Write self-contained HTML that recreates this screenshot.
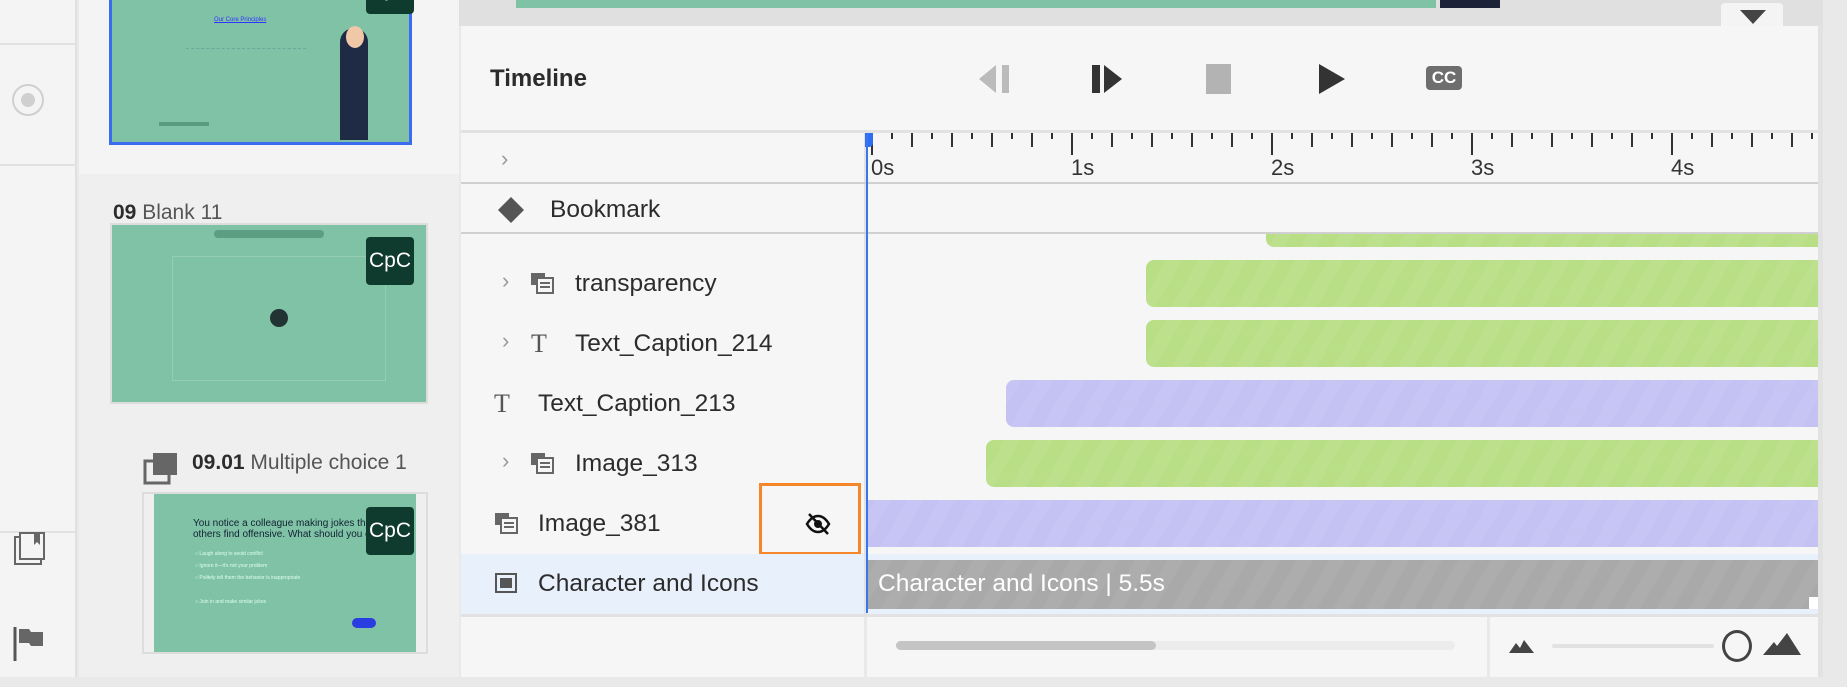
<!DOCTYPE html>
<html><head><meta charset="utf-8"><style>
*{margin:0;padding:0;box-sizing:border-box}
body{width:1847px;height:687px;overflow:hidden;background:#e9e9e9;font-family:"Liberation Sans",sans-serif;position:relative;color:#2c2c2c}
.a{position:absolute}
.thumb{position:absolute;background:#80c2a6}
.cpc{position:absolute;width:48px;height:48px;background:#0f3a2e;border-radius:4px;color:#fff;font-size:21px;display:flex;align-items:center;justify-content:center}
.lbl{position:absolute;font-size:24.5px;color:#2c2c2c;white-space:nowrap}
.bar{position:absolute;border-radius:8px 0 0 8px;background-image:repeating-linear-gradient(-60deg,rgba(255,255,255,0) 0 14px,rgba(255,255,255,.05) 14px 28px)}
.g{background-color:#b8de86}.p{background-color:#c4c2f3}
</style></head><body>
<!-- left rail -->
<div class="a" style="left:0;top:0;width:77px;height:687px;background:#f4f4f4;border-right:2px solid #e0e0e0"></div>
<div class="a" style="left:0;top:43px;width:77px;height:2px;background:#e2e2e2"></div>
<div class="a" style="left:0;top:164px;width:77px;height:2px;background:#e2e2e2"></div>
<div class="a" style="left:0;top:531px;width:77px;height:2px;background:#e2e2e2"></div>
<div class="a" style="left:12px;top:84px;width:32px;height:32px;border:2px solid #cfcfcf;border-radius:50%"></div>
<div class="a" style="left:21px;top:93px;width:14px;height:14px;background:#cfcfcf;border-radius:50%"></div>
<svg class="a" style="left:14px;top:532px" width="32" height="34"><rect x="1" y="5" width="26" height="27" fill="none" stroke="#666" stroke-width="2"/><rect x="6" y="1" width="24" height="26" fill="#f4f4f4" stroke="#666" stroke-width="2"/><path d="M20 1v12l3-3 3 3V1z" fill="#666"/></svg>
<svg class="a" style="left:13px;top:626px" width="34" height="36"><path d="M2 1v34" stroke="#555" stroke-width="3"/><path d="M6 3h10l2 3h12v14H18l-2-3H6z" fill="#666"/></svg>
<!-- slide panel -->
<div class="a" style="left:79px;top:0;width:380px;height:174px;background:#f4f4f4"></div>
<div class="a" style="left:79px;top:174px;width:380px;height:503px;background:#efefef"></div>
<div class="a" style="left:109px;top:-4px;width:303px;height:149px;border:3px solid #3b6cf0;background:#80c2a6"></div>
<div class="a" style="left:214px;top:17px;font-size:6px;color:#33f;text-decoration:underline">Our Core Principles</div>
<div class="a" style="left:186px;top:48px;width:120px;height:30px;border-top:1px dashed #6a9"></div>
<div class="a" style="left:340px;top:28px;width:28px;height:112px;background:#1f2a44;border-radius:14px 14px 0 0"></div>
<div class="a" style="left:346px;top:26px;width:18px;height:22px;background:#f0c8a8;border-radius:50%"></div>
<div class="cpc" style="left:366px;top:-34px">CpC</div>
<div class="a" style="left:159px;top:122px;width:50px;height:4px;background:#5a9a80"></div>
<div class="a" style="left:113px;top:201px;font-size:21px"><b>09</b> <span style="color:#555">Blank 11</span></div>
<div class="a" style="left:110px;top:223px;width:318px;height:181px;border:2px solid #ddd;background:#80c2a6"></div>
<div class="a" style="left:214px;top:230px;width:110px;height:8px;background:#5d9d84;border-radius:4px"></div>
<div class="a" style="left:172px;top:256px;width:214px;height:125px;border:1px solid #94ccb4"></div>
<div class="a" style="left:270px;top:309px;width:18px;height:18px;background:#233;border-radius:50%"></div>
<div class="cpc" style="left:366px;top:237px">CpC</div>
<svg class="a" style="left:143px;top:451px" width="38" height="34"><rect x="2" y="10" width="24" height="22" fill="none" stroke="#666" stroke-width="3"/><rect x="10" y="2" width="24" height="22" fill="#666"/></svg>
<div class="a" style="left:192px;top:451px;font-size:21px"><b>09.01</b> <span style="color:#555">Multiple choice 1</span></div>
<div class="a" style="left:142px;top:492px;width:286px;height:162px;border:2px solid #ddd;background:#efefef"></div>
<div class="thumb" style="left:154px;top:494px;width:262px;height:158px"></div>
<div class="a" style="left:193px;top:518px;font-size:10px;color:#123;line-height:11px">You notice a colleague making jokes that<br>others find offensive. What should you do?</div>
<div class="a" style="left:195px;top:548px;font-size:5px;color:#dfe;line-height:12px">○ Laugh along to avoid conflict<br>○ Ignore it—it's not your problem<br>○ Politely tell them the behavior is inappropriate<br><br>○ Join in and make similar jokes</div>
<div class="a" style="left:352px;top:618px;width:24px;height:10px;background:#2a3de0;border-radius:5px"></div>
<div class="cpc" style="left:366px;top:507px">CpC</div>
<!-- timeline panel -->
<div class="a" style="left:459px;top:0;width:1364px;height:26px;background:#e0e0e0"></div>
<div class="a" style="left:516px;top:0;width:920px;height:8px;background:#80c2a6"></div>
<div class="a" style="left:1440px;top:0;width:60px;height:8px;background:#1c2238"></div>
<div class="a" style="left:1721px;top:3px;width:62px;height:24px;background:#f4f4f4;border-radius:4px 4px 0 0"></div>
<svg class="a" style="left:1739px;top:9px" width="28" height="16"><path d="M1 1h26L14 15z" fill="#444"/></svg>
<div class="a" style="left:461px;top:26px;width:1362px;height:104px;background:#f6f6f6"></div>
<div class="a" style="left:490px;top:65px;font-size:24px;font-weight:bold;color:#2c2c2c">Timeline</div>
<svg class="a" style="left:978px;top:64px" width="36" height="30"><path d="M1 15L18 1v28z" fill="#bbb"/><rect x="24" y="1" width="7" height="28" fill="#bbb"/></svg>
<svg class="a" style="left:1090px;top:64px" width="36" height="30"><rect x="2" y="1" width="8" height="28" fill="#333"/><path d="M14 1l18 14-18 14z" fill="#333"/></svg>
<div class="a" style="left:1206px;top:64px;width:25px;height:30px;background:#b3b3b3"></div>
<svg class="a" style="left:1317px;top:63px" width="30" height="32"><path d="M2 1l26 15L2 31z" fill="#333"/></svg>
<div class="a" style="left:1426px;top:66px;width:36px;height:24px;background:#6e6e6e;border-radius:4px;color:#fff;font-weight:bold;font-size:17px;text-align:center;line-height:24px">CC</div>
<div class="a" style="left:461px;top:130px;width:1362px;height:3px;background:#e2e2e2"></div>
<!-- left column -->
<div class="a" style="left:461px;top:133px;width:403px;height:482px;background:#f6f6f6"></div>
<div class="a" style="left:864px;top:133px;width:3px;height:482px;background:#e2e2e2"></div>
<div class="a" style="left:867px;top:133px;width:951px;height:482px;background:#f6f6f6"></div>
<div class="a" style="left:1818px;top:26px;width:5px;height:651px;background:#e2e2e2"></div>
<div class="a" style="left:501px;top:146px;font-size:22px;color:#999">›</div>
<!-- ruler ticks -->
<svg class="a" style="left:867px;top:133px" width="951" height="50">
<g stroke="#333" stroke-width="2">
<path d="M5 0v22M205 0v22M405 0v22M605 0v22M805 0v22"/>
<path d="M25 0v6M65 0v6M105 0v6M145 0v6M185 0v6M225 0v6M265 0v6M305 0v6M345 0v6M385 0v6M425 0v6M465 0v6M505 0v6M545 0v6M585 0v6M625 0v6M665 0v6M705 0v6M745 0v6M785 0v6M825 0v6M865 0v6M905 0v6M945 0v6"/>
<path d="M45 0v14M85 0v14M125 0v14M165 0v14M245 0v14M285 0v14M325 0v14M365 0v14M445 0v14M485 0v14M525 0v14M565 0v14M645 0v14M685 0v14M725 0v14M765 0v14M845 0v14M885 0v14M925 0v14"/>
</g>
<g font-size="22" fill="#333" font-family="Liberation Sans"><text x="4" y="42">0s</text><text x="204" y="42">1s</text><text x="404" y="42">2s</text><text x="604" y="42">3s</text><text x="804" y="42">4s</text></g>
</svg>
<div class="a" style="left:865px;top:133px;width:8px;height:14px;background:#2d6ff0;border-radius:0 0 4px 0"></div>
<div class="a" style="left:461px;top:182px;width:1357px;height:2px;background:#d0d0d0"></div>
<div class="a" style="left:461px;top:232px;width:1357px;height:2px;background:#d0d0d0"></div>
<svg class="a" style="left:497px;top:196px" width="28" height="28"><path d="M14 1l13 13-13 13L1 14z" fill="#555"/></svg>
<div class="lbl" style="left:550px;top:196px">Bookmark</div>
<!-- blue playhead -->
<div class="a" style="left:866px;top:133px;width:2px;height:480px;background:#3a75f0"></div>
<!-- rows -->
<div class="bar g" style="left:1266px;top:234px;width:552px;height:13px;border-radius:0 0 0 8px"></div>
<div class="a" style="left:502px;top:268px;font-size:22px;color:#999">›</div>
<svg class="a" style="left:530px;top:272px" width="24" height="22"><rect x="1" y="1" width="14" height="12" fill="#666"/><rect x="7" y="6" width="16" height="15" fill="#f6f6f6" stroke="#666" stroke-width="2"/><path d="M10 11h10M10 15h10" stroke="#666" stroke-width="2"/></svg>
<div class="lbl" style="left:575px;top:270px">transparency</div>
<div class="bar g" style="left:1146px;top:260px;width:672px;height:47px"></div>
<div class="a" style="left:502px;top:328px;font-size:22px;color:#999">›</div>
<div class="a" style="left:531px;top:329px;font-size:26px;font-family:'Liberation Serif',serif;color:#555">T</div>
<div class="lbl" style="left:575px;top:330px">Text_Caption_214</div>
<div class="bar g" style="left:1146px;top:320px;width:672px;height:47px"></div>
<div class="a" style="left:494px;top:389px;font-size:26px;font-family:'Liberation Serif',serif;color:#555">T</div>
<div class="lbl" style="left:538px;top:390px">Text_Caption_213</div>
<div class="bar p" style="left:1006px;top:380px;width:812px;height:47px"></div>
<div class="a" style="left:502px;top:448px;font-size:22px;color:#999">›</div>
<svg class="a" style="left:530px;top:452px" width="24" height="22"><rect x="1" y="1" width="14" height="12" fill="#666"/><rect x="7" y="6" width="16" height="15" fill="#f6f6f6" stroke="#666" stroke-width="2"/><path d="M10 11h10M10 15h10" stroke="#666" stroke-width="2"/></svg>
<div class="lbl" style="left:575px;top:450px">Image_313</div>
<div class="bar g" style="left:986px;top:440px;width:832px;height:47px"></div>
<svg class="a" style="left:494px;top:512px" width="24" height="22"><rect x="1" y="1" width="14" height="12" fill="#666"/><rect x="7" y="6" width="16" height="15" fill="#f6f6f6" stroke="#666" stroke-width="2"/><path d="M10 11h10M10 15h10" stroke="#666" stroke-width="2"/></svg>
<div class="lbl" style="left:538px;top:510px">Image_381</div>
<div class="a" style="left:759px;top:483px;width:102px;height:72px;border:3px solid #f6862a"></div>
<svg class="a" style="left:805px;top:512px" width="26" height="24"><path d="M2 12c3-5 7-8 11-8s8 3 11 8c-3 5-7 8-11 8s-8-3-11-8z" fill="none" stroke="#111" stroke-width="2.5"/><circle cx="13" cy="12" r="4" fill="#111"/><path d="M4 2l19 20" stroke="#111" stroke-width="2.5"/></svg>
<div class="bar p" style="left:868px;top:500px;width:950px;height:47px;border-radius:0"></div>
<div class="a" style="left:461px;top:554px;width:403px;height:60px;background:#e8f0fb"></div>
<div class="a" style="left:868px;top:554px;width:950px;height:60px;background:#e8f0fb"></div>
<div class="a" style="left:495px;top:573px;width:22px;height:20px;border:2px solid #555"></div>
<div class="a" style="left:500px;top:578px;width:12px;height:10px;background:#555"></div>
<div class="lbl" style="left:538px;top:570px">Character and Icons</div>
<div class="bar" style="left:868px;top:560px;width:950px;height:49px;border-radius:0;background-color:#a9a9a9"></div>
<div class="a" style="left:878px;top:570px;font-size:24.5px;color:#fff;white-space:nowrap">Character and Icons | 5.5s</div>
<div class="a" style="left:1809px;top:597px;width:9px;height:12px;background:#fff"></div>
<!-- bottom -->
<div class="a" style="left:461px;top:614px;width:1357px;height:3px;background:#e2e2e2"></div>
<div class="a" style="left:461px;top:617px;width:403px;height:60px;background:#f6f6f6"></div>
<div class="a" style="left:867px;top:617px;width:620px;height:60px;background:#f6f6f6"></div>
<div class="a" style="left:1490px;top:617px;width:328px;height:60px;background:#f6f6f6"></div>
<div class="a" style="left:896px;top:641px;width:559px;height:9px;background:#ececec;border-radius:5px"></div>
<div class="a" style="left:896px;top:641px;width:260px;height:9px;background:#c4c4c4;border-radius:5px"></div>
<svg class="a" style="left:1508px;top:638px" width="28" height="16"><path d="M1 15L8 5l4 5 4-8 10 13z" fill="#444"/></svg>
<div class="a" style="left:1552px;top:644px;width:162px;height:4px;background:#e2e2e2;border-radius:2px"></div>
<div class="a" style="left:1722px;top:630px;width:30px;height:32px;border:3px solid #444;border-radius:50%;background:#f6f6f6"></div>
<svg class="a" style="left:1762px;top:632px" width="40" height="24"><path d="M1 23L12 10l3 4 10-13 14 22z" fill="#444"/></svg>
<div class="a" style="left:0;top:677px;width:1847px;height:10px;background:#e9e9e9"></div>
</body></html>
